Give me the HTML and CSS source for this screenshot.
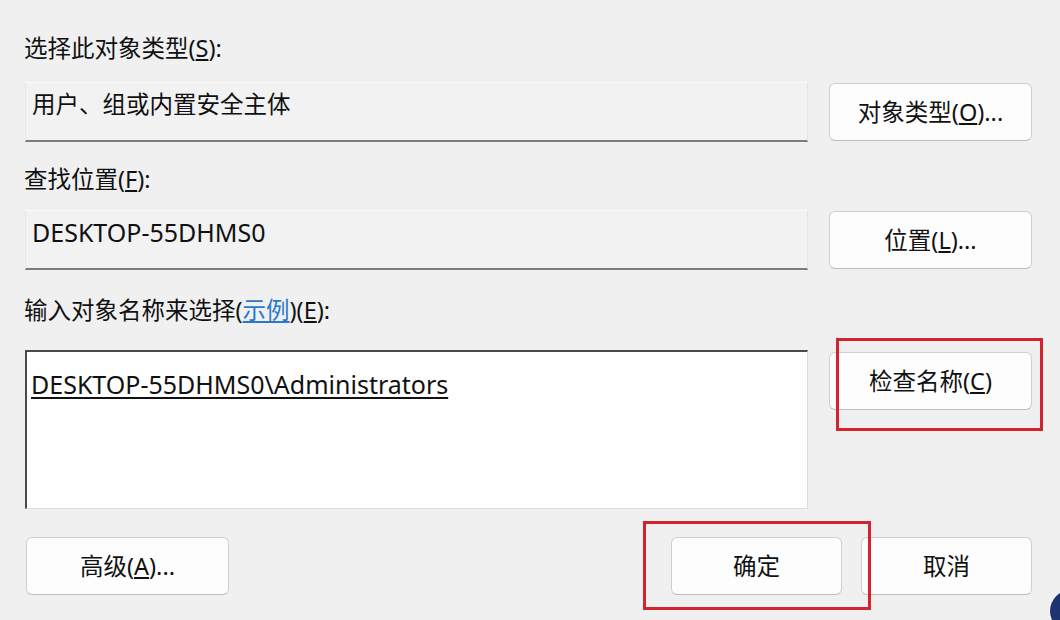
FILE: index.html
```html
<!DOCTYPE html>
<html lang="zh-CN">
<head>
    <meta charset="UTF-8">
    <meta name="viewport" content="width=device-width, initial-scale=1.0">
    <title>选择用户或组</title>
    <link rel="stylesheet" href="styles.css">
</head>
<body>
    <div class="dialog">
        <div class="label label-first">选择此对象类型(<u>S</u>):</div>
        <div class="row">
            <div class="field">用户、组或内置安全主体</div>
            <button class="btn">对象类型(<u>O</u>)...</button>
        </div>

        <div class="label label-second">查找位置(<u>F</u>):</div>
        <div class="row row-second">
            <div class="field"><span class="lat">DESKTOP-55DHMS0</span></div>
            <button class="btn">位置(<u>L</u>)...</button>
        </div>

        <div class="label label-third">输入对象名称来选择(<a class="link" href="#">示例</a>)(<u>E</u>):</div>
        <div class="row row-names">
            <div class="names"><span class="lat resolved">DESKTOP-55DHMS0\Administrators</span></div>
            <div class="mark mark-check">
                <button class="btn">检查名称(<u>C</u>)</button>
            </div>
        </div>

        <div class="footer">
            <button class="btn">高级(<u>A</u>)...</button>
            <div class="actions">
                <div class="mark mark-ok">
                    <button class="btn btn-small">确定</button>
                </div>
                <button class="btn btn-small">取消</button>
            </div>
        </div>
    </div>
    <div class="corner"></div>
</body>
</html>
```

FILE: styles.css
```css
body {
    margin: 0;
    background-color: #f0f0f1;
    color: #111;
    font-family: 'Noto Sans', 'Noto Sans CJK SC', sans-serif;
    font-size: 23.5px;
    line-height: 30px;
    width: 1060px;
    height: 620px;
    overflow: hidden;
    position: relative;
}
.dialog {
    padding: 0 28px 0 25px;
    display: flex;
    flex-direction: column;
}
.label {
    height: 30px;
    margin-left: -1px;
}
.label-first {
    margin-top: 33px;
}
.label-second {
    margin-top: 22px;
}
.label-third {
    margin-top: 25px;
}
.lat {
    font-size: 25px;
}
.link {
    color: #2a78cc;
    text-decoration: underline;
}
.row {
    display: flex;
    align-items: center;
    justify-content: space-between;
    margin-top: 19px;
}
.row-second {
    margin-top: 16px;
}
.field {
    box-sizing: border-box;
    width: 783px;
    height: 60px;
    padding: 6px 6px 0;
    background-color: #f2f2f3;
    border: 1px solid #e6e6e8;
    border-top-color: #fbfbfb;
    border-bottom: 2px solid #7c7c7e;
}
.btn {
    box-sizing: border-box;
    width: 203px;
    height: 58px;
    padding: 0;
    background-color: #fdfdfd;
    border: 1px solid #cfcfd2;
    border-bottom-color: #bdbdc0;
    border-radius: 6px;
    color: #111;
    font-family: inherit;
    font-size: 23.5px;
    line-height: 30px;
}
.btn-small {
    width: 171px;
}
.row-names {
    align-items: flex-start;
    margin-top: 25px;
}
.names {
    box-sizing: border-box;
    width: 783px;
    height: 159px;
    padding: 17px 4px 0;
    background-color: #fefefe;
    border: 1px solid #dcdcde;
    border-top: 2px solid #4a4a4c;
    border-left: 2px solid #4a4a4c;
}
.resolved {
    text-decoration: underline;
    text-underline-offset: 3px;
}
.mark {
    position: relative;
}
.mark-check {
    padding-top: 2px;
}
.mark::after {
    content: '';
    position: absolute;
    border: 3px solid #d3242d;
}
.mark-check::after {
    left: 7px;
    top: -12px;
    width: 201px;
    height: 87px;
}
.mark-ok::after {
    left: -28px;
    top: -16px;
    width: 222px;
    height: 83px;
}
.footer {
    display: flex;
    justify-content: space-between;
    margin-top: 28px;
    padding-left: 1px;
}
.actions {
    display: flex;
    gap: 19px;
}
.corner {
    position: absolute;
    right: -32px;
    bottom: -12px;
    width: 42px;
    height: 42px;
    border-radius: 50%;
    background-color: #1d3470;
}
```
